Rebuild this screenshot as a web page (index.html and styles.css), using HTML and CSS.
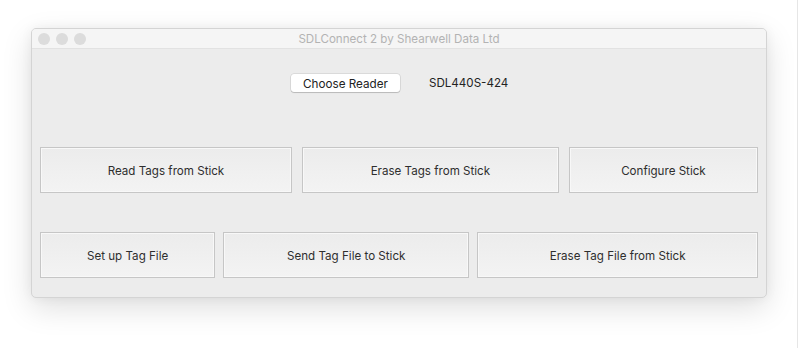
FILE: index.html
```html
<!DOCTYPE html>
<html>
<head>
<meta charset="utf-8">
<link rel="stylesheet" href="styles.css">
</head>
<body>
<div class="edge"></div>
<div class="window">
  <div class="titlebar">
    <div class="lights"><span class="light"></span><span class="light"></span><span class="light"></span></div>
    <div class="title">SDLConnect 2 by Shearwell Data Ltd</div>
  </div>
  <div class="content">
    <div class="reader-row">
      <button class="choose">Choose Reader</button>
      <span class="reader-name">SDL440S-424</span>
    </div>
    <div class="row row1">
      <button class="btn b-read">Read Tags from Stick</button>
      <button class="btn b-erase">Erase Tags from Stick</button>
      <button class="btn b-config">Configure Stick</button>
    </div>
    <div class="row row2">
      <button class="btn b-setup">Set up Tag File</button>
      <button class="btn b-send">Send Tag File to Stick</button>
      <button class="btn b-erasefile">Erase Tag File from Stick</button>
    </div>
  </div>
</div>
</body>
</html>
```

FILE: styles.css
```css
html, body {
  margin: 0;
  padding: 0;
  background: #ffffff;
  width: 799px;
  height: 348px;
  overflow: hidden;
  position: relative;
}
body {
  font-family: Inter, "Liberation Sans", sans-serif;
  font-size: 11.6px;
  color: #333;
  padding-top: 28px;
  box-sizing: border-box;
}
.edge {
  position: absolute;
  right: 1px;
  top: 0;
  width: 1px;
  height: 348px;
  background: #e6e6e6;
}
.window {
  margin-left: 31px;
  width: 736px;
  height: 270px;
  box-sizing: border-box;
  border: 1px solid #d4d4d4;
  border-radius: 5px;
  background: #ececec;
  box-shadow: 0 10px 30px rgba(0,0,0,0.13), 0 0 12px rgba(0,0,0,0.05);
  overflow: hidden;
  display: flex;
  flex-direction: column;
}
.titlebar {
  height: 19px;
  background: #f5f5f5;
  border-bottom: 1px solid #e2e2e2;
  display: flex;
  align-items: center;
  position: relative;
}
.lights {
  display: flex;
  gap: 6px;
  padding-left: 6px;
}
.light {
  width: 12px;
  height: 12px;
  border-radius: 50%;
  background: #dcdcdc;
}
.title {
  position: absolute;
  left: 0;
  right: 0;
  text-align: center;
  font-size: 11.6px;
  color: #b3b3b3;
  top: 3px;
}
.content {
  padding: 25px 8px 0 8px;
}
.reader-row {
  display: flex;
  align-items: center;
  height: 18px;
  padding-left: 251px;
}
.choose {
  width: 109px;
  height: 18px;
  background: #fff;
  border: none;
  border-radius: 3px;
  box-shadow: 0 0 0 0.5px rgba(0,0,0,0.15), 0 1px 1px rgba(0,0,0,0.15);
  font-family: inherit;
  font-size: 11.7px;
  color: #222;
  padding: 1px 0 0 0;
}
.reader-name {
  margin-left: 29px;
  font-size: 11.6px;
  color: #222;
  margin-top: -1px;
}
.row {
  display: flex;
}
.row1 {
  margin-top: 55px;
  gap: 10px;
}
.row2 {
  margin-top: 39px;
  gap: 8px;
}
.btn {
  height: 46px;
  box-sizing: border-box;
  border: 1px solid #c6c6c6;
  box-shadow: inset 0 0 0 1px #f8f8f8;
  background: linear-gradient(#ececec, #f3f3f3);
  font-family: inherit;
  font-size: 11.6px;
  color: #2e2e2e;
  padding: 2px 0 0 0;
  border-radius: 0;
}
.b-read { width: 253px; }
.b-erase { width: 258px; }
.b-config { width: 190px; }
.b-setup { width: 176px; }
.b-send { width: 247px; }
.b-erasefile { width: 282px; }
```
